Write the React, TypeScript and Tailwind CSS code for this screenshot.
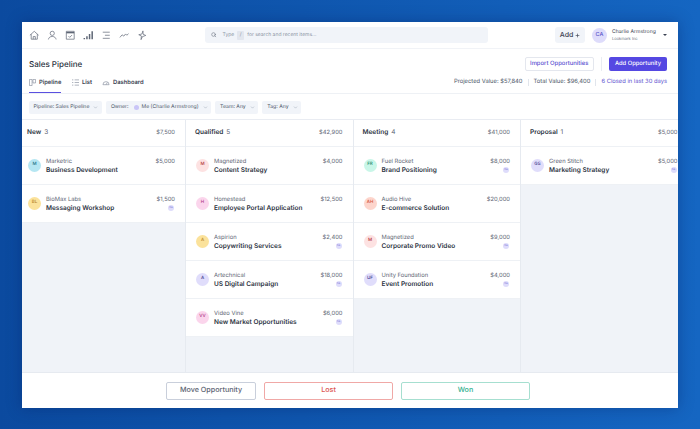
import { ChevronDown, Search, Plus } from "lucide-react";

type Deal = {
  initials: string;
  tone: string;
  company: string;
  title: string;
  amount: string;
  owner?: boolean;
};

type Stage = {
  name: string;
  count: number;
  total: string;
  first?: boolean;
  deals: Deal[];
};

const stages: Stage[] = [
  {
    name: "New",
    count: 3,
    total: "$7,500",
    first: true,
    deals: [
      { initials: "M", tone: "bg-[#b5e6f2] text-[#1f6f86]", company: "Marketric", title: "Business Development", amount: "$5,000" },
      { initials: "BL", tone: "bg-[#fbe29b] text-[#b7862a]", company: "BioMax Labs", title: "Messaging Workshop", amount: "$1,500", owner: true },
    ],
  },
  {
    name: "Qualified",
    count: 5,
    total: "$42,900",
    deals: [
      { initials: "M", tone: "bg-[#fde2e2] text-[#b4383c]", company: "Magnetized", title: "Content Strategy", amount: "$4,000" },
      { initials: "H", tone: "bg-[#fbd5ec] text-[#b03a87]", company: "Homestead", title: "Employee Portal Application", amount: "$12,500" },
      { initials: "A", tone: "bg-[#fbe29b] text-[#b7862a]", company: "Aspirion", title: "Copywriting Services", amount: "$2,400", owner: true },
      { initials: "A", tone: "bg-[#e0ddfb] text-[#3f3a8c]", company: "Artechnical", title: "US Digital Campaign", amount: "$18,000", owner: true },
      { initials: "VV", tone: "bg-[#fbd5ec] text-[#b03a87]", company: "Video Vine", title: "New Market Opportunities", amount: "$6,000", owner: true },
    ],
  },
  {
    name: "Meeting",
    count: 4,
    total: "$41,000",
    deals: [
      { initials: "FR", tone: "bg-[#c9f6e8] text-[#1f8a6c]", company: "Fuel Rocket", title: "Brand Positioning", amount: "$8,000", owner: true },
      { initials: "AH", tone: "bg-[#fdd5cc] text-[#d2503c]", company: "Audio Hive", title: "E-commerce Solution", amount: "$20,000" },
      { initials: "M", tone: "bg-[#fde2e2] text-[#b4383c]", company: "Magnetized", title: "Corporate Promo Video", amount: "$9,000", owner: true },
      { initials: "UF", tone: "bg-[#e0ddfb] text-[#3f3a8c]", company: "Unity Foundation", title: "Event Promotion", amount: "$4,000", owner: true },
    ],
  },
  {
    name: "Proposal",
    count: 1,
    total: "$5,000",
    deals: [
      { initials: "GS", tone: "bg-[#e0ddfb] text-[#3f3a8c]", company: "Green Stitch", title: "Marketing Strategy", amount: "$5,000", owner: true },
    ],
  },
];

const navIcons = [
  <path key="home" d="M1 6 6 1.500 11 6M2.500 4.800v5.700h7V4.800M4.800 10.500V7.500h2.400v3" />,
  <path key="user" d="M6 6.200a2.400 2.400 0 1 0 0-4.800 2.400 2.400 0 0 0 0 4.800ZM1.600 10.800C2 8.600 3.600 7.400 6 7.400s4 1.200 4.400 3.400" />,
  <g key="cal">
    <path d="M1.500 1.500h9v9h-9ZM4 7l1.400 1.400L8 5.800" />
    <path d="M1.500 3h9" strokeWidth="1.600" />
  </g>,
  <path key="bars" strokeWidth="1.700" d="M1.500 10.500V9M4.500 10.500V7M7.500 10.500V4.500M10.500 10.500V1.500" />,
  <path key="lines" d="M2 2.500h8M4.500 6h5.500M2 9.500h8" />,
  <path key="trend" d="M1 8.500 3.500 5.500 5.500 7 7.500 4.500 9 6 11 4" />,
  <path key="spark" d="M6.800 1 5.600 4.600 2 5.400l3 1.400L4.600 11l1.600-3.400 3.800-1.400-3-1.300Z" />,
];

function Chip({ children }: { children: React.ReactNode }) {
  return (
    <div className="flex h-[13px] items-center rounded-[2px] bg-[#f1f4f9] pr-[3.5px] pl-[5px] text-[5.150px] whitespace-nowrap text-[#4b5567]">
      <span className="flex items-center pt-[1.5px]">{children}</span>
      <ChevronDown className="ml-[4px] h-[5px] w-[5px] shrink-0 text-[#8a93a5]" />
    </div>
  );
}

function OwnerDot() {
  return (
    <div className="flex h-[6px] w-[6px] items-center justify-center rounded-full bg-[#dedcfb] text-[2.5px] text-[#5b54c9]">
      CA
    </div>
  );
}

function DealCard({ deal, first }: { deal: Deal; first?: boolean }) {
  return (
    <div className={`flex h-[38px] items-center border-b border-[#eef1f5] bg-white pr-[10px] ${first ? "pl-[6px]" : "pl-[10px]"}`}>
      <div className={`flex h-[13px] w-[13px] shrink-0 items-center justify-center rounded-full text-[4.5px] font-medium ${deal.tone}`}>
        {deal.initials}
      </div>
      <div className="ml-[5px] min-w-0 flex-1">
        <div className="text-[5.800px] leading-[9px] text-[#5c6473]">{deal.company}</div>
        <div className="whitespace-nowrap text-[6.500px] leading-[9px] font-semibold text-[#2c3342]">{deal.title}</div>
      </div>
      <div className="flex h-[18px] flex-col items-end self-center">
        <div className="text-[5.800px] leading-[9px] text-[#5c6473]">{deal.amount}</div>
        {deal.owner && (
          <div className="mt-[1px] mr-[1px]">
            <OwnerDot />
          </div>
        )}
      </div>
    </div>
  );
}

function Column({ stage }: { stage: Stage }) {
  return (
    <div className={`flex shrink-0 flex-col border-r border-[#e6eaf0] ${stage.first ? "w-[164px]" : "w-[167.5px]"}`}>
      <div className={`flex h-[27px] shrink-0 items-center border-b border-[#eef1f5] bg-white pr-[10px] ${stage.first ? "pl-[5px]" : "pl-[9px]"}`}>
        <span className="text-[6.500px] font-semibold text-[#2c3342]">{stage.name}</span>
        <span className="ml-[3px] text-[6.500px] text-[#5c6473]">{stage.count}</span>
        <span className="ml-auto text-[5.800px] text-[#5c6473]">{stage.total}</span>
      </div>
      {stage.deals.map((deal) => (
        <DealCard key={deal.title} deal={deal} first={stage.first} />
      ))}
    </div>
  );
}

export default function App() {
  return (
    <div className="h-[429px] w-[700px] overflow-hidden bg-gradient-to-r from-[#0b4a9f] to-[#1566c2] px-[22px] pt-[22px] font-['Inter',sans-serif] antialiased [text-rendering:geometricPrecision]">
      <div className="flex h-[386px] w-[656px] flex-col bg-white shadow-[0_0_14px_rgba(0,25,90,0.35)]">
        {/* Top nav */}
        <div className="flex h-[27px] shrink-0 items-center border-b border-[#f1f3f7] pr-[11px] pl-[6.5px]">
          <div className="flex w-[126px] gap-[7.5px]">
            {navIcons.map((icon, i) => (
              <svg key={i} viewBox="0 0 12 12" className="h-[10.5px] w-[10.5px]" fill="none" stroke="#5e6675" strokeWidth="0.8">
                {icon}
              </svg>
            ))}
          </div>
          <div className="ml-[50.5px] flex h-[16px] w-[283px] items-center rounded-[3px] bg-[#f1f4f9] pl-[6px] text-[5px] text-[#8c94a4]">
            <Search className="h-[5.5px] w-[5.5px] text-[#6c7483]" strokeWidth={2.5} />
            <span className="ml-[6px] pt-[2px]">Type</span>
            <span className="mx-[3px] flex h-[9px] w-[7px] items-center justify-center rounded-[1px] bg-[#e2e6ee] pt-[1px] text-[5px]">/</span>
            <span className="pt-[2px]">for search and recent items...</span>
          </div>
          <div className="ml-auto flex h-[16px] w-[30px] items-center justify-center gap-[2px] rounded-[3px] bg-[#f1f4f9] text-[7px] font-medium text-[#3b4252]">
            Add
            <Plus className="h-[5px] w-[5px]" strokeWidth={3} />
          </div>
          <div className="ml-[7px] flex h-[15px] w-[15px] items-center justify-center rounded-full bg-[#dedcfb] text-[5.5px] font-medium text-[#5b54c9]">
            CA
          </div>
          <div className="ml-[5px] w-[49px]">
            <div className="whitespace-nowrap text-[5.100px] leading-[7px] text-[#3b4252]">Charlie Armstrong</div>
            <div className="whitespace-nowrap text-[4px] leading-[6px] text-[#6c7483]">Lookmark Inc</div>
          </div>
          <div className="ml-[2px] h-0 w-0 border-x-[2px] border-t-[2px] border-x-transparent border-t-[#3b4252]" />
        </div>

        {/* Title and tabs */}
        <div className="flex h-[45px] shrink-0 border-b border-[#eef1f5] pr-[11px] pl-[7px]">
          <div className="flex flex-col">
            <div className="mt-[8px] text-[8px] leading-[14px] font-medium text-[#2c3342]">Sales Pipeline</div>
            <div className="mt-[4.5px] flex h-[20px] items-start text-[5.800px] font-semibold text-[#3b4252]">
              <div className="flex h-[17.5px] w-[32px] items-start border-b-[1.5px] border-[#5b50e0] pt-[3px]">
                <svg viewBox="0 0 8 8" className="mr-[3px] h-[7px] w-[7px] shrink-0" fill="none" stroke="#7d8595" strokeWidth="0.7">
                  <path d="M.5.5h3v7h-3ZM4.500.5h3v4h-3Z" />
                </svg>
                <span className="leading-[7px]">Pipeline</span>
              </div>
              <div className="ml-[11px] flex items-center pt-[3px]">
                <svg viewBox="0 0 8 8" className="mr-[3px] h-[7px] w-[7px] shrink-0" fill="none" stroke="#7d8595" strokeWidth="0.7">
                  <path d="M0 1h1.500M0 4h1.500M0 7h1.500M3 1h5M3 4h5M3 7h5" />
                </svg>
                <span className="leading-[7px]">List</span>
              </div>
              <div className="ml-[10px] flex items-center pt-[3px]">
                <svg viewBox="0 0 8 8" className="mr-[3px] h-[7px] w-[8px] shrink-0" fill="none" stroke="#7d8595" strokeWidth="0.7">
                  <path d="M.5 6.500a3.500 3.500 0 0 1 7 0ZM4 6.500 5.500 4" />
                </svg>
                <span className="leading-[7px]">Dashboard</span>
              </div>
            </div>
          </div>
          <div className="ml-auto flex flex-col items-end">
            <div className="mt-[8px] flex h-[14px] items-center">
              <div className="flex h-[14px] w-[68.5px] items-center justify-center rounded-[2px] border border-[#e4e7ee] text-[5.900px] font-medium whitespace-nowrap text-[#5b50d0]">
                Import Opportunities
              </div>
              <div className="mx-[7.25px] h-[14px] w-px bg-[#e9ecf2]" />
              <div className="flex h-[14px] w-[58px] items-center justify-center rounded-[2px] bg-[#5548e2] text-[5.800px] font-medium whitespace-nowrap text-white">
                Add Opportunity
              </div>
            </div>
            <div className="mt-[7.5px] flex h-[7px] items-center text-[5.800px] whitespace-nowrap text-[#4b5567]">
              <span>Projected Value: $57,840</span>
              <span className="mx-[5px] h-[7px] w-px bg-[#e1e5ec]" />
              <span>Total Value: $96,400</span>
              <span className="mx-[5px] h-[7px] w-px bg-[#e1e5ec]" />
              <span className="text-[#5b50d0]">6 Closed in last 30 days</span>
            </div>
          </div>
        </div>

        {/* Filters */}
        <div className="flex h-[26px] shrink-0 items-start gap-[4px] border-b border-[#e9ecf2] pt-[6.5px] pl-[6.5px]">
          <Chip>Pipeline: Sales Pipeline</Chip>
          <Chip>
            <span className="mr-[5px]">Owner:</span>
            <span className="mr-[3px] flex h-[5px] w-[5px] rounded-full bg-[#c9c5f7]" />
            Me (Charlie Armstrong)
          </Chip>
          <Chip>Team: Any</Chip>
          <Chip>Tag: Any</Chip>
        </div>

        {/* Board */}
        <div className="flex min-h-0 flex-1 overflow-hidden bg-[#f0f3f8]">
          {stages.map((stage) => (
            <Column key={stage.name} stage={stage} />
          ))}
        </div>

        {/* Footer actions */}
        <div className="flex h-[36px] shrink-0 items-center justify-center gap-[8px] border-t border-[#e6eaf0] bg-white pr-[4px] text-[7.200px] font-medium">
          <div className="flex h-[18px] w-[90px] items-center justify-center rounded-[2px] border border-[#c9cfdb] text-[#5c6473]">
            Move Opportunity
          </div>
          <div className="flex h-[18px] w-[129px] items-center justify-center rounded-[2px] border border-[#f0a8a6] text-[#dc5552]">
            Lost
          </div>
          <div className="flex h-[18px] w-[129px] items-center justify-center rounded-[2px] border border-[#a6dfd0] text-[#35b08f]">
            Won
          </div>
        </div>
      </div>
    </div>
  );
}
